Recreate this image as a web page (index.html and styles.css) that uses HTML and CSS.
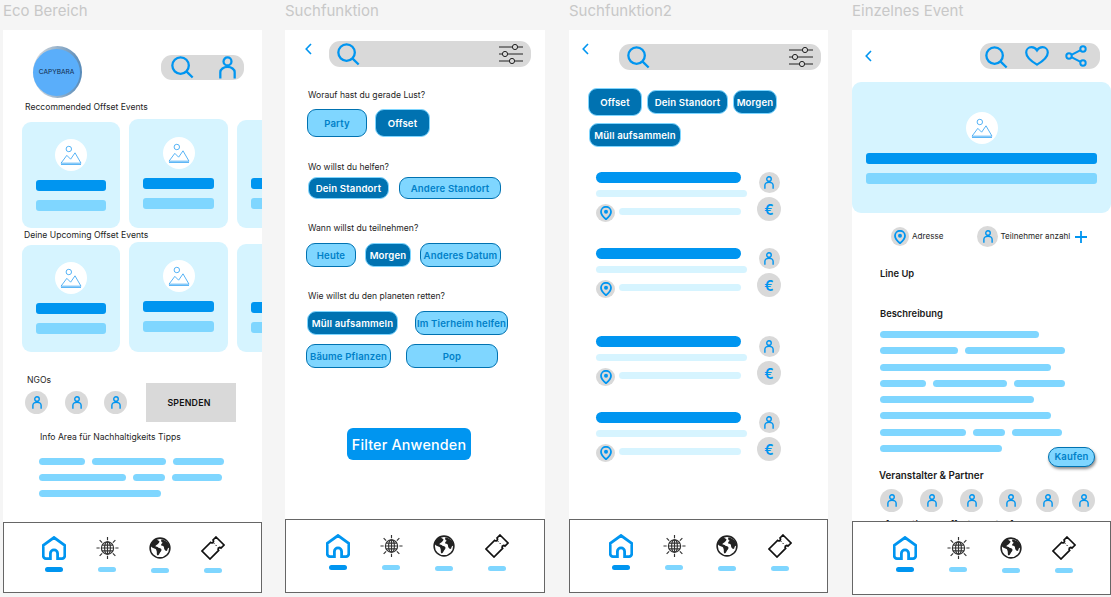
FILE: index.html
```html
<!DOCTYPE html>
<html lang="de">
<head>
	<meta charset="utf-8">
	<meta name="viewport" content="width=device-width,initial-scale=1">
	<title>Eco Bereich</title>
	<link rel="stylesheet" href="styles.css">
</head>
<body>
	<svg class="defs" aria-hidden="true">
		<symbol id="i-search" viewBox="0 0 24 24"><circle cx="10" cy="10" r="8.6"/><path d="M16.3 16.3 22.6 22.4"/></symbol>
		<symbol id="i-user" viewBox="0 0 18 24"><circle cx="9" cy="5.6" r="4.2"/><path d="M1.4 23.6V17a7.6 5.6 0 0 1 15.2 0v6.6"/></symbol>
		<symbol id="i-image" viewBox="0 0 24 22"><circle cx="9.6" cy="4.4" r="3"/><path d="M1 20 7.4 11.4 11.6 15.6 16.4 8.6 23 20Z"/><path d="M1 21.4H23"/></symbol>
		<symbol id="i-sliders" viewBox="0 0 24 20"><path d="M0 3H13M19 3H24M0 10H3M9 10H24M0 17H10M16 17H24"/><circle cx="16" cy="3" r="2.6"/><circle cx="6" cy="10" r="2.6"/><circle cx="13" cy="17" r="2.6"/></symbol>
		<symbol id="i-back" viewBox="0 0 7 12"><path d="M6 1 1.2 6 6 11"/></symbol>
		<symbol id="i-pin" viewBox="0 0 12 14"><path d="M6 13.2C3 10.8 1 8.4 1 5.8a5 5 0 0 1 10 0c0 2.6-2 5-5 7.4Z"/><circle class="dot" cx="6" cy="5.8" r="2"/></symbol>
		<symbol id="i-heart" viewBox="0 0 24 20"><path d="M12 18.6C5 14.4 1.2 10.6 1.2 6.4 1.2 3.4 3.6 1.2 6.4 1.2c2.4 0 4.4 1.2 5.6 3.2 1.2-2 3.2-3.2 5.6-3.2 2.8 0 5.2 2.2 5.2 5.2 0 4.2-3.800 8-10.800 12.200Z"/></symbol>
		<symbol id="i-share" viewBox="0 0 22 22"><circle cx="18" cy="4" r="2.7"/><circle cx="4" cy="11" r="2.7"/><circle cx="18" cy="18" r="2.7"/><path d="M15.6 5.2 6.4 9.8M6.4 12.2 15.6 16.8"/></symbol>
		<symbol id="i-plus" viewBox="0 0 12 12"><path d="M6 0V12M0 6H12"/></symbol>
		<symbol id="i-home" viewBox="0 0 24 24"><path d="M8.4 22.6H4A2.8 2.8 0 0 1 1.2 19.800V9.400L12 1.500 22.800 9.400V19.800A2.800 2.800 0 0 1 20 22.600H15.600V17.500A3.600 3.600 0 0 0 8.400 17.500Z"/></symbol>
		<symbol id="i-web" viewBox="0 0 24 24"><circle cx="12" cy="12" r="6.4"/><ellipse cx="12" cy="12" rx="3" ry="6.400"/><path d="M12 5.600V18.400M5.600 12H18.400M6.400 9H17.600M6.400 15H17.600M12 .500V3.800M12 20.200V23.500M.500 12H3.800M20.200 12H23.500M3.800 3.800 6.400 6.400M20.200 3.800 17.600 6.400M3.800 20.200 6.400 17.600M20.200 20.200 17.600 17.600"/></symbol>
		<symbol id="i-earth" viewBox="0 0 24 24"><circle class="rim" cx="12" cy="12" r="10.800"/><path d="M8 1.800C4.800 3 2.500 6 1.800 9.500c1 2 3 2.800 4.700 3.300 1.200.3 1.400 1.400 1.800 2.400.5 1.200 0 3 .5 4.600 1.300.4 2.200-1 2.800-2.200.7-1.400 2.300-2.300 2-4-.3-1.400-2.300-1.700-3.300-2-.9-1.100-2.500-.6-3.400-1.400.1-1.200 1.500-1.600 2.500-2.400 1.100-.9 2.200-1.700 2-3.100C10.200 4 9 3 8 1.800Z"/><path d="M13.600 2.600c-1 1.500 0 2.800 1.400 3.600-.8 1-2 1.200-1.700 2.600.3 1.400 2 .7 2.700 1.600.7.900.2 2.200.9 3.200.7.900 1.500 2 2.600 1.400.9-.6.300-1.700 1.100-2.500.7-.7 1.500-.9 2-1.500-.4-4.200-4-7.700-9-8.400Z"/></symbol>
		<symbol id="i-ticket" viewBox="0 0 24 24"><path d="M15 1 23 9 20 12A1.700 1.700 0 0 0 17.600 14.400L9 23 1 15 9.600 6.400A1.700 1.700 0 0 0 12 4Z"/><path class="tear" d="M12.400 6.800 17.200 11.600"/></symbol>
	</svg>

	<div class="canvas">

		<section class="board">
			<h2 class="board-title">Eco Bereich</h2>
			<div class="screen">
				<div class="home-top">
					<div class="logo"><span>CAPYBARA</span></div>
					<div class="pill pill-home">
						<svg class="ico ico-search"><use href="#i-search"/></svg>
						<svg class="ico ico-user"><use href="#i-user"/></svg>
					</div>
				</div>
				<p class="label label-rec">Reccommended Offset Events</p>
				<div class="card-row">
					<div class="card card-a"><span class="thumb"><svg class="ico-image"><use href="#i-image"/></svg></span><i class="bar"></i><i class="bar bar-light"></i></div>
					<div class="card card-b"><span class="thumb"><svg class="ico-image"><use href="#i-image"/></svg></span><i class="bar"></i><i class="bar bar-light"></i></div>
					<div class="card card-c"><span class="thumb"><svg class="ico-image"><use href="#i-image"/></svg></span><i class="bar"></i><i class="bar bar-light"></i></div>
				</div>
				<p class="label label-up">Deine Upcoming Offset Events</p>
				<div class="card-row card-row-2">
					<div class="card card-a"><span class="thumb"><svg class="ico-image"><use href="#i-image"/></svg></span><i class="bar"></i><i class="bar bar-light"></i></div>
					<div class="card card-b"><span class="thumb"><svg class="ico-image"><use href="#i-image"/></svg></span><i class="bar"></i><i class="bar bar-light"></i></div>
					<div class="card card-c"><span class="thumb"><svg class="ico-image"><use href="#i-image"/></svg></span><i class="bar"></i><i class="bar bar-light"></i></div>
				</div>
				<div class="ngo">
					<div>
						<p class="label label-ngo">NGOs</p>
						<div class="ngo-list">
							<span class="avatar"><svg class="ico ico-avatar"><use href="#i-user"/></svg></span>
							<span class="avatar"><svg class="ico ico-avatar"><use href="#i-user"/></svg></span>
							<span class="avatar"><svg class="ico ico-avatar"><use href="#i-user"/></svg></span>
						</div>
					</div>
					<div class="donate">SPENDEN</div>
				</div>
				<p class="label label-info">Info Area für Nachhaltigkeits Tipps</p>
				<div class="lines lines-info">
					<div class="line-row"><i class="line" style="width:46px"></i><i class="line" style="width:74px"></i><i class="line" style="width:51px"></i></div>
					<div class="line-row"><i class="line" style="width:87px"></i><i class="line" style="width:32px"></i><i class="line" style="width:50px"></i></div>
					<div class="line-row"><i class="line" style="width:122px"></i></div>
				</div>
				<nav class="nav nav-home">
					<span class="tab tab-on"><svg class="ico ico-tab"><use href="#i-home"/></svg><i></i></span>
					<span class="tab"><svg class="tab-web"><use href="#i-web"/></svg><i></i></span>
					<span class="tab tab-low"><svg class="tab-earth"><use href="#i-earth"/></svg><i></i></span>
					<span class="tab tab-low"><svg class="tab-ticket"><use href="#i-ticket"/></svg><i></i></span>
				</nav>
			</div>
		</section>

		<section class="board board-search">
			<h2 class="board-title">Suchfunktion</h2>
			<div class="screen">
				<div class="search-top">
					<svg class="ico ico-back"><use href="#i-back"/></svg>
					<div class="pill pill-search">
						<svg class="ico ico-search"><use href="#i-search"/></svg>
						<svg class="ico-sliders"><use href="#i-sliders"/></svg>
					</div>
				</div>
				<div class="filters">
					<p class="label">Worauf hast du gerade Lust?</p>
					<div class="chips chips-1">
						<span class="chip chip-tall w60">Party</span>
						<span class="chip chip-tall chip-on w55">Offset</span>
					</div>
					<p class="label q-2">Wo willst du helfen?</p>
					<div class="chips chips-2">
						<span class="chip chip-on w81">Dein Standort</span>
						<span class="chip w102">Andere Standort</span>
					</div>
					<p class="label q-3">Wann willst du teilnehmen?</p>
					<div class="chips chips-3">
						<span class="chip chip-mid w50">Heute</span>
						<span class="chip chip-mid chip-on w46">Morgen</span>
						<span class="chip chip-mid w81">Anderes Datum</span>
					</div>
					<p class="label q-4">Wie willst du den planeten retten?</p>
					<div class="chips chips-4">
						<span class="chip chip-mid chip-on w91">Müll aufsammeln</span>
						<span class="chip chip-mid w93">Im Tierheim helfen</span>
					</div>
					<div class="chips chips-5">
						<span class="chip chip-mid w85">Bäume Pflanzen</span>
						<span class="chip chip-mid w92">Pop</span>
					</div>
					<a class="apply">Filter Anwenden</a>
				</div>
				<nav class="nav nav-search">
					<span class="tab tab-on"><svg class="ico ico-tab"><use href="#i-home"/></svg><i></i></span>
					<span class="tab"><svg class="tab-web"><use href="#i-web"/></svg><i></i></span>
					<span class="tab tab-low"><svg class="tab-earth"><use href="#i-earth"/></svg><i></i></span>
					<span class="tab tab-low"><svg class="tab-ticket"><use href="#i-ticket"/></svg><i></i></span>
				</nav>
			</div>
		</section>

		<section class="board">
			<h2 class="board-title">Suchfunktion2</h2>
			<div class="screen">
				<div class="search-top search-top-2">
					<svg class="ico ico-back"><use href="#i-back"/></svg>
					<div class="pill pill-search">
						<svg class="ico ico-search"><use href="#i-search"/></svg>
						<svg class="ico-sliders"><use href="#i-sliders"/></svg>
					</div>
				</div>
				<div class="chips chips-result">
					<span class="chip chip-tall chip-on w54">Offset</span>
					<span class="chip chip-mid chip-on w81">Dein Standort</span>
					<span class="chip chip-mid chip-on w44">Morgen</span>
				</div>
				<div class="chips chips-result-2">
					<span class="chip chip-mid chip-on w92">Müll aufsammeln</span>
				</div>
				<div class="result result-first">
					<div class="result-body"><i class="bar result-title"></i><i class="result-sub"></i><div class="result-place"><span class="avatar avatar-pin"><svg class="ico-pin"><use href="#i-pin"/></svg></span><i class="result-sub result-addr"></i></div></div>
					<div class="result-side"><span class="avatar avatar-sm"><svg class="ico ico-avatar"><use href="#i-user"/></svg></span><span class="avatar avatar-euro">€</span></div>
				</div>
				<div class="result">
					<div class="result-body"><i class="bar result-title"></i><i class="result-sub"></i><div class="result-place"><span class="avatar avatar-pin"><svg class="ico-pin"><use href="#i-pin"/></svg></span><i class="result-sub result-addr"></i></div></div>
					<div class="result-side"><span class="avatar avatar-sm"><svg class="ico ico-avatar"><use href="#i-user"/></svg></span><span class="avatar avatar-euro">€</span></div>
				</div>
				<div class="result result-far">
					<div class="result-body"><i class="bar result-title"></i><i class="result-sub"></i><div class="result-place"><span class="avatar avatar-pin"><svg class="ico-pin"><use href="#i-pin"/></svg></span><i class="result-sub result-addr"></i></div></div>
					<div class="result-side"><span class="avatar avatar-sm"><svg class="ico ico-avatar"><use href="#i-user"/></svg></span><span class="avatar avatar-euro">€</span></div>
				</div>
				<div class="result">
					<div class="result-body"><i class="bar result-title"></i><i class="result-sub"></i><div class="result-place"><span class="avatar avatar-pin"><svg class="ico-pin"><use href="#i-pin"/></svg></span><i class="result-sub result-addr"></i></div></div>
					<div class="result-side"><span class="avatar avatar-sm"><svg class="ico ico-avatar"><use href="#i-user"/></svg></span><span class="avatar avatar-euro">€</span></div>
				</div>
				<nav class="nav nav-result">
					<span class="tab tab-on"><svg class="ico ico-tab"><use href="#i-home"/></svg><i></i></span>
					<span class="tab"><svg class="tab-web"><use href="#i-web"/></svg><i></i></span>
					<span class="tab tab-low"><svg class="tab-earth"><use href="#i-earth"/></svg><i></i></span>
					<span class="tab tab-low"><svg class="tab-ticket"><use href="#i-ticket"/></svg><i></i></span>
				</nav>
			</div>
		</section>

		<section class="board">
			<h2 class="board-title">Einzelnes Event</h2>
			<div class="screen screen-event">
				<div class="event-top">
					<svg class="ico ico-back"><use href="#i-back"/></svg>
					<div class="pill pill-event">
						<svg class="ico ico-search"><use href="#i-search"/></svg>
						<svg class="ico ico-heart"><use href="#i-heart"/></svg>
						<svg class="ico ico-share"><use href="#i-share"/></svg>
					</div>
				</div>
				<div class="hero">
					<span class="thumb"><svg class="ico-image"><use href="#i-image"/></svg></span>
					<i class="bar"></i><i class="bar bar-light"></i>
				</div>
				<div class="meta">
					<span class="avatar avatar-addr"><svg class="ico-pin"><use href="#i-pin"/></svg></span>
					<span class="meta-text">Adresse</span>
					<span class="avatar avatar-people"><svg class="ico ico-avatar"><use href="#i-user"/></svg></span>
					<span class="meta-text">Teilnehmer anzahl</span>
					<svg class="ico ico-plus"><use href="#i-plus"/></svg>
				</div>
				<h3 class="head head-lineup">Line Up</h3>
				<h3 class="head head-desc">Beschreibung</h3>
				<div class="lines lines-desc">
					<div class="line-row"><i class="line" style="width:159px"></i></div>
					<div class="line-row"><i class="line" style="width:78px"></i><i class="line" style="width:100px"></i></div>
					<div class="line-row"><i class="line" style="width:171px"></i></div>
					<div class="line-row"><i class="line" style="width:46px"></i><i class="line" style="width:74px"></i><i class="line" style="width:51px"></i></div>
					<div class="line-row"><i class="line" style="width:154px"></i></div>
					<div class="line-row"><i class="line" style="width:171px"></i></div>
					<div class="line-row"><i class="line" style="width:86px"></i><i class="line" style="width:32px"></i><i class="line" style="width:50px"></i></div>
					<div class="line-row line-row-buy"><i class="line" style="width:122px"></i><a class="buy">Kaufen</a></div>
				</div>
				<h3 class="head head-partner">Veranstalter &amp; Partner</h3>
				<div class="partners">
					<span class="avatar"><svg class="ico ico-avatar"><use href="#i-user"/></svg></span>
					<span class="avatar"><svg class="ico ico-avatar"><use href="#i-user"/></svg></span>
					<span class="avatar"><svg class="ico ico-avatar"><use href="#i-user"/></svg></span>
					<span class="avatar"><svg class="ico ico-avatar"><use href="#i-user"/></svg></span>
					<span class="avatar"><svg class="ico ico-avatar"><use href="#i-user"/></svg></span>
					<span class="avatar"><svg class="ico ico-avatar"><use href="#i-user"/></svg></span>
				</div>
				<h3 class="head head-hidden">Informationen Offset Event Infos</h3>
				<nav class="nav nav-event">
					<span class="tab tab-on"><svg class="ico ico-tab"><use href="#i-home"/></svg><i></i></span>
					<span class="tab"><svg class="tab-web"><use href="#i-web"/></svg><i></i></span>
					<span class="tab tab-low"><svg class="tab-earth"><use href="#i-earth"/></svg><i></i></span>
					<span class="tab tab-low"><svg class="tab-ticket"><use href="#i-ticket"/></svg><i></i></span>
				</nav>
			</div>
		</section>

	</div>
</body>
</html>
```

FILE: styles.css
```css
*{margin:0;padding:0;box-sizing:border-box;}
html,body{height:100%;overflow:hidden;}
body{background:#F5F5F5;font-family:"Inter","Liberation Sans",sans-serif;color:#1E1E1E;}
.defs{display:none;}
i{display:block;font-style:normal;}

.canvas{display:flex;gap:24px;padding-left:3px;}
.board{width:259px;flex:none;}
.board-search{width:260px;margin-left:-1px;}
.board-title{height:30px;padding-top:1px;font-size:15px;font-weight:400;line-height:19px;color:#C8C8C8;}
.screen{position:relative;height:563px;background:#FFF;overflow:hidden;}
.screen-event{height:565px;}

/* icons */
.ico{display:block;fill:none;stroke:#0095F0;stroke-width:2.4;flex:none;}
.ico-search{width:23px;height:23px;}
.ico-user{width:17px;height:23px;}
.ico-avatar{width:10px;height:13px;stroke-width:2.6;}
.ico-back{width:7px;height:12px;stroke-width:1.6;}
.ico-heart{width:24px;height:20px;stroke-width:2.2;}
.ico-share{width:22px;height:22px;stroke-width:2;}
.ico-plus{width:12px;height:12px;stroke-width:1.8;margin-left:5px;}
.ico-tab{width:24px;height:24px;stroke-width:2.8;}
.ico-image{width:22px;height:20px;fill:none;stroke:#45ABF4;stroke-width:1;display:block;}
.ico-sliders{width:24px;height:20px;fill:none;stroke:#222;stroke-width:1;flex:none;}
.ico-pin{width:12px;height:14px;fill:#D9D9D9;stroke:#0095F0;stroke-width:1.8;}
#i-pin .dot{fill:#0095F0;stroke:none;}

/* shared blocks */
.pill{display:flex;align-items:center;height:26px;background:#D9D9D9;border-radius:11px;}
.label{font-size:8.6px;line-height:12px;color:#1E1E1E;}
.card-row{display:flex;align-items:flex-end;gap:9px;height:109px;margin-top:6px;padding-left:19px;}
.card-row-2{height:110px;margin-top:1px;}
.card{flex:none;padding:17px 14px 0;background:#D6F4FF;border-radius:9px;width:99px;}
.card-a{height:106px;width:98px;}
.card-b{height:109px;padding-top:18px;}
.card-c{height:108px;}
.card-row-2 .card-a{height:107px;}
.card-row-2 .card-b{height:110px;}
.card .thumb,.hero .thumb{margin:0 auto;}
.thumb{display:flex;align-items:center;justify-content:center;width:32px;height:32px;background:#FFF;border-radius:50%;}
.bar{height:11px;margin-top:9px;background:#0095F0;border-radius:3px;}
.bar-light{background:#7FD6FF;}
.avatar{display:flex;align-items:center;justify-content:center;flex:none;width:23px;height:23px;background:#D9D9D9;border-radius:50%;}
.lines{display:flex;flex-direction:column;}
.line-row{display:flex;gap:7px;}
.line{flex:none;height:7px;background:#7FD6FF;border-radius:4px;}

/* eco bereich */
.home-top{display:flex;justify-content:space-between;align-items:flex-start;padding:16px 18px 0 30px;}
.logo{display:flex;align-items:center;width:49px;height:52px;padding:2px 2px 2px 0;background:linear-gradient(90deg,#DDD,#5589B8);border-radius:50%;}
.logo span{display:flex;align-items:center;justify-content:center;width:47px;height:47px;background:#5AAEFA;border-radius:50%;font-size:6.6px;color:#102A4A;}
.pill-home{justify-content:space-between;width:83px;height:25px;margin-top:9px;padding:0 8px 0 10px;}
.label-rec{margin:3px 0 0 22px;}
.label-up{margin:1px 0 0 21px;}
.ngo{display:flex;justify-content:space-between;align-items:flex-start;margin-top:22px;padding:0 26px 0 22px;}
.label-ngo{padding-left:2px;}
.ngo-list{display:flex;gap:17px;margin-top:5px;}
.ngo-list .avatar:last-child{margin-left:-1px;}
.donate{display:flex;align-items:center;justify-content:center;width:90px;height:39px;margin-top:9px;padding-right:4px;background:#D9D9D9;font-size:8.8px;font-weight:600;color:#111;letter-spacing:.2px;}
.label-info{margin:9px 0 0 37px;}
.lines-info{gap:9px;margin:15px 0 0 36px;}

/* bottom bar */
.nav{position:absolute;left:0;right:0;bottom:0;display:flex;align-items:flex-start;gap:29px;height:74px;padding:14px 0 0 40px;background:#FFF;border:1px solid #666;}
.nav-home{height:71px;padding:13px 0 0 38px;}
.nav-result{padding-left:39px;}
.tab{display:flex;flex-direction:column;align-items:center;flex:none;width:24px;}
.tab svg{display:block;height:24px;flex:none;}
.tab i{width:18px;height:5px;margin-top:7px;background:#7FD6FF;border-radius:3px;}
.tab-on i{background:#0095F0;}
.tab-low i{margin-top:8px;}
.tab-web{width:23px;fill:none;stroke:#333;stroke-width:1.2;}
.tab-earth{width:22px;fill:#222;stroke:none;}
#i-earth .rim{fill:none;stroke:#222;stroke-width:1.7;}
.tab-ticket{width:24px;fill:none;stroke:#111;stroke-width:1.7;}
#i-ticket .tear{stroke-dasharray:1.5 1.5;stroke-width:1;}

/* suchfunktion */
.search-top{display:flex;align-items:flex-start;padding:11px 0 0 20px;}
.search-top .ico-back{margin-top:2px;}
.search-top-2{padding:14px 0 0 13px;}
.search-top-2 .ico-back{margin-top:-1px;}
.pill-search{justify-content:space-between;width:202px;margin-left:17px;padding:0 8px 0 8px;}
.search-top-2 .pill-search{margin-left:30px;}
.filters{padding:22px 0 0 23px;}
.q-2{margin-top:24px;}
.q-3{margin-top:23px;}
.q-4{margin-top:23px;}
.chips{display:flex;align-items:center;}
.chip{display:flex;align-items:center;justify-content:center;flex:none;height:22px;background:#7FD6FF;border:1.5px solid #0072B1;border-radius:9px;font-size:9.6px;font-weight:600;color:#0080C8;letter-spacing:.15px;white-space:nowrap;}
.chip-tall{height:28px;}
.chip-mid{height:24px;}
.chip-on{background:#0072B1;border-color:#7FD6FF;color:#FFF;}
.chips-1{gap:8px;margin:8px 0 0 -1px;}
.chips-2{gap:10px;margin-top:4px;}
.chips-3{gap:9px;margin:9px 0 0 -2px;}
.chips-4{gap:17px;margin:9px 0 0 -1px;}
.chips-5{gap:15px;margin:9px 0 0 -2px;}
.chips-result{gap:5px;margin:18px 0 0 19px;}
.chips-result-2{margin:7px 0 0 20px;}
.w44{width:44px;}.w46{width:46px;}.w50{width:50px;}.w54{width:54px;}.w55{width:55px;}.w60{width:60px;}
.w81{width:81px;}.w85{width:85px;}.w91{width:91px;}.w92{width:92px;}.w93{width:93px;}.w102{width:102px;}
.apply{display:flex;align-items:center;justify-content:center;width:124px;height:32px;margin:60px 0 0 39px;background:#0095F0;border-radius:6px;font-size:14.3px;font-weight:500;color:#FFF;letter-spacing:.2px;}

/* suchfunktion2 */
.result{display:flex;gap:10px;height:50px;margin:26px 0 0 27px;}
.result-first{margin-top:25px;}
.result-far{margin-top:38px;}
.result-body{width:151px;}
.result-title{width:145px;margin-top:0;border-radius:6px;}
.result-sub{height:7px;margin-top:7px;background:#D6F4FF;border-radius:4px;}
.result-place{display:flex;gap:4px;margin-top:7px;}
.result-addr{width:122px;margin-top:4px;}
.avatar-pin{width:19px;height:18px;}
.result-side{display:flex;flex-direction:column;align-items:center;gap:4px;width:24px;}
.avatar-sm{width:21px;height:21px;}
.avatar-euro{width:24px;height:24px;font-size:14px;font-weight:600;color:#0095F0;}

/* einzelnes event */
.event-top{display:flex;align-items:center;justify-content:space-between;padding:13px 11px 0 13px;}
.pill-event{justify-content:space-between;width:120px;padding:0 13px 0 5px;}
.pill-event .ico-search{margin-top:3px;}
.hero{height:131px;margin-top:13px;padding:30px 14px 0;background:#D6F4FF;border-radius:9px;}
.meta{display:flex;align-items:center;margin-top:13px;padding-left:39px;}
.meta-text{font-size:8.1px;line-height:21px;color:#1E1E1E;}
.avatar-addr{width:18px;height:19px;margin-right:3px;}
.avatar-people{width:21px;height:21px;margin:0 2px 0 34px;}
.head{margin-left:28px;font-size:9.4px;font-weight:600;line-height:12px;color:#1A1A1A;}
.head-lineup{margin-top:21px;}
.head-desc{margin-top:28px;}
.head-partner{margin:3px 0 0 27px;font-size:9.8px;}
.head-hidden{margin:7px 0 0 25px;}
.lines-desc{gap:9.25px;margin:11px 0 0 28px;}
.line-row-buy{height:22px;}
.buy{display:flex;align-items:center;justify-content:center;width:47px;height:20px;margin:2px 16px 0 auto;background:#7FD6FF;border:1.5px solid #0072B1;border-radius:10px;box-shadow:1px 2px 3px rgba(0,0,0,.45);font-size:9.6px;font-weight:600;color:#0080C8;letter-spacing:.15px;}
.partners{display:flex;margin:7px 0 0 28px;}
.partners .avatar{margin-right:17px;}
.partners .avatar:nth-child(3){margin-right:16px;}
.partners .avatar:nth-child(4){margin-right:14px;}
.partners .avatar:nth-child(5){margin-right:13px;}
```
